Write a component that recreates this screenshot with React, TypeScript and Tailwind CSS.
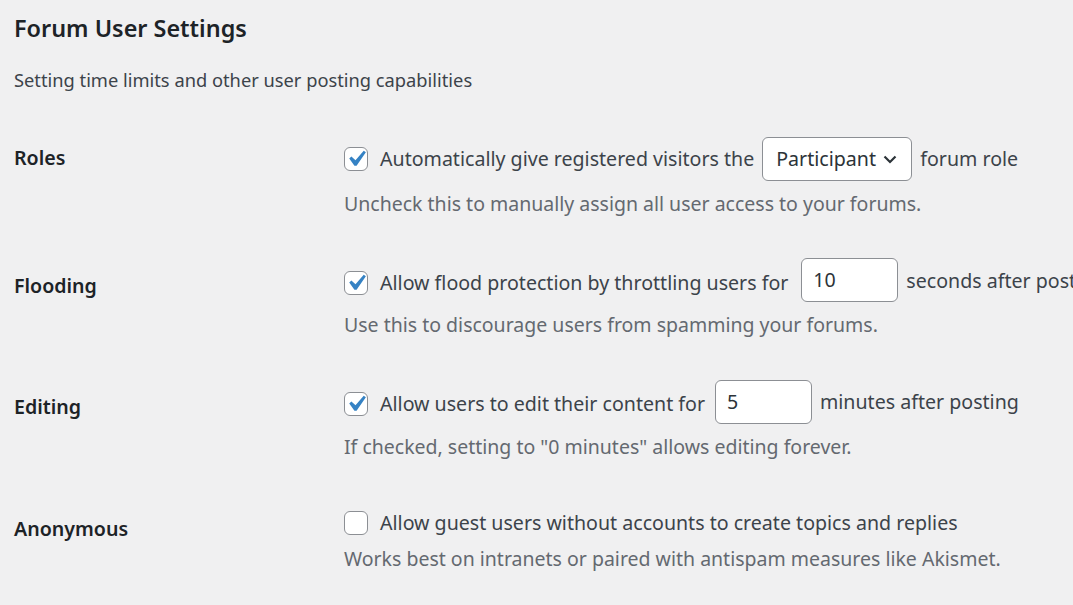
import React from "react";

const FONT = "font-['Noto_Sans','Open_Sans',sans-serif]";

function Check({ checked }: { checked: boolean }) {
  return (
    <span className="relative inline-flex h-[24px] w-[24px] shrink-0 items-center justify-center rounded-[6px] border-[1.5px] border-[#8c8f94] bg-white">
      {checked && (
        <svg viewBox="0 0 20 20" className="absolute h-[32px] w-[32px]" fill="#3582c4">
          <path d="M14.83 4.89l1.34.94-5.81 8.38H9.02L5.78 9.67l1.34-1.25 2.57 2.4z" />
        </svg>
      )}
    </span>
  );
}

function Field({ value, width }: { value: string; width: string }) {
  return (
    <span className={`inline-flex h-[44px] ${width} shrink-0 items-center rounded-[6px] border-[1.5px] border-[#8c8f94] bg-white pl-[11px] text-[19.6px] text-[#2c3338]`}>
      {value}
    </span>
  );
}

export default function App() {
  return (
    <div className={`h-[605px] w-[1073px] overflow-hidden bg-[#f0f0f1] pl-[14px] ${FONT}`}>
      <h2 className="pt-[12px] text-[23.4px] leading-[32px] font-semibold text-[#1d2327]">Forum User Settings</h2>
      <p className="mt-[22px] text-[18.3px] leading-[28px] text-[#3c434a]">Setting time limits and other user posting capabilities</p>

      {/* Roles */}
      <div className="mt-[43px] flex whitespace-nowrap">
        <div className="w-[330px] shrink-0 pt-[6px] text-[19.6px] leading-[30px] font-semibold text-[#1d2327]">Roles</div>
        <div className="flex flex-col">
          <div className="flex h-[44px] items-center text-[19.6px] text-[#3c434a]">
            <Check checked />
            <span className="ml-[12px]">Automatically give registered visitors the</span>
            <span className="mx-[8px] inline-flex h-[44px] w-[150px] shrink-0 items-center justify-between rounded-[6px] border-[1.5px] border-[#8c8f94] bg-white pl-[13px] pr-[11px] text-[#2c3338]">
              Participant
              <svg viewBox="0 0 20 20" className="h-[20px] w-[20px]" fill="none" stroke="#2c3338" strokeWidth="2.2">
                <path d="M4.5 7.5l5.5 5.5 5.5-5.5" />
              </svg>
            </span>
            <span>forum role</span>
          </div>
          <p className="mt-[9px] text-[19.5px] leading-[28px] text-[#646970]">Uncheck this to manually assign all user access to your forums.</p>
        </div>
      </div>

      {/* Flooding */}
      <div className="mt-[40px] flex whitespace-nowrap">
        <div className="w-[330px] shrink-0 pt-[13px] text-[19.6px] leading-[30px] font-semibold text-[#1d2327]">Flooding</div>
        <div className="flex flex-col">
          <div className="flex h-[44px] items-center text-[19.6px] text-[#3c434a]">
            <span className="mt-[6px] flex items-center">
              <Check checked />
              <span className="ml-[12px]">Allow flood protection by throttling users for</span>
            </span>
            <span className="ml-[13px] mr-[8px]"><Field value="10" width="w-[97px]" /></span>
            <span className="mt-[2px]">seconds after posting</span>
          </div>
          <p className="mt-[9px] text-[19.5px] leading-[28px] text-[#646970]">Use this to discourage users from spamming your forums.</p>
        </div>
      </div>

      {/* Editing */}
      <div className="mt-[41px] flex whitespace-nowrap">
        <div className="w-[330px] shrink-0 pt-[12px] text-[19.6px] leading-[30px] font-semibold text-[#1d2327]">Editing</div>
        <div className="flex flex-col">
          <div className="flex h-[44px] items-center text-[19.6px] text-[#3c434a]">
            <span className="mt-[4px] flex items-center">
              <Check checked />
              <span className="ml-[12px]">Allow users to edit their content for</span>
            </span>
            <span className="ml-[10px] mr-[8px]"><Field value="5" width="w-[97px]" /></span>
            <span>minutes after posting</span>
          </div>
          <p className="mt-[9px] text-[19.5px] leading-[28px] text-[#646970]">If checked, setting to "0 minutes" allows editing forever.</p>
        </div>
      </div>

      {/* Anonymous */}
      <div className="mt-[47px] flex whitespace-nowrap">
        <div className="w-[330px] shrink-0 pt-[6px] text-[19.6px] leading-[30px] font-semibold text-[#1d2327]">Anonymous</div>
        <div className="flex flex-col">
          <div className="flex h-[30px] items-center text-[19.6px] text-[#3c434a]">
            <Check checked={false} />
            <span className="ml-[12px]">Allow guest users without accounts to create topics and replies</span>
          </div>
          <p className="mt-[7px] text-[19.5px] leading-[28px] text-[#646970]">Works best on intranets or paired with antispam measures like Akismet.</p>
        </div>
      </div>
    </div>
  );
}
